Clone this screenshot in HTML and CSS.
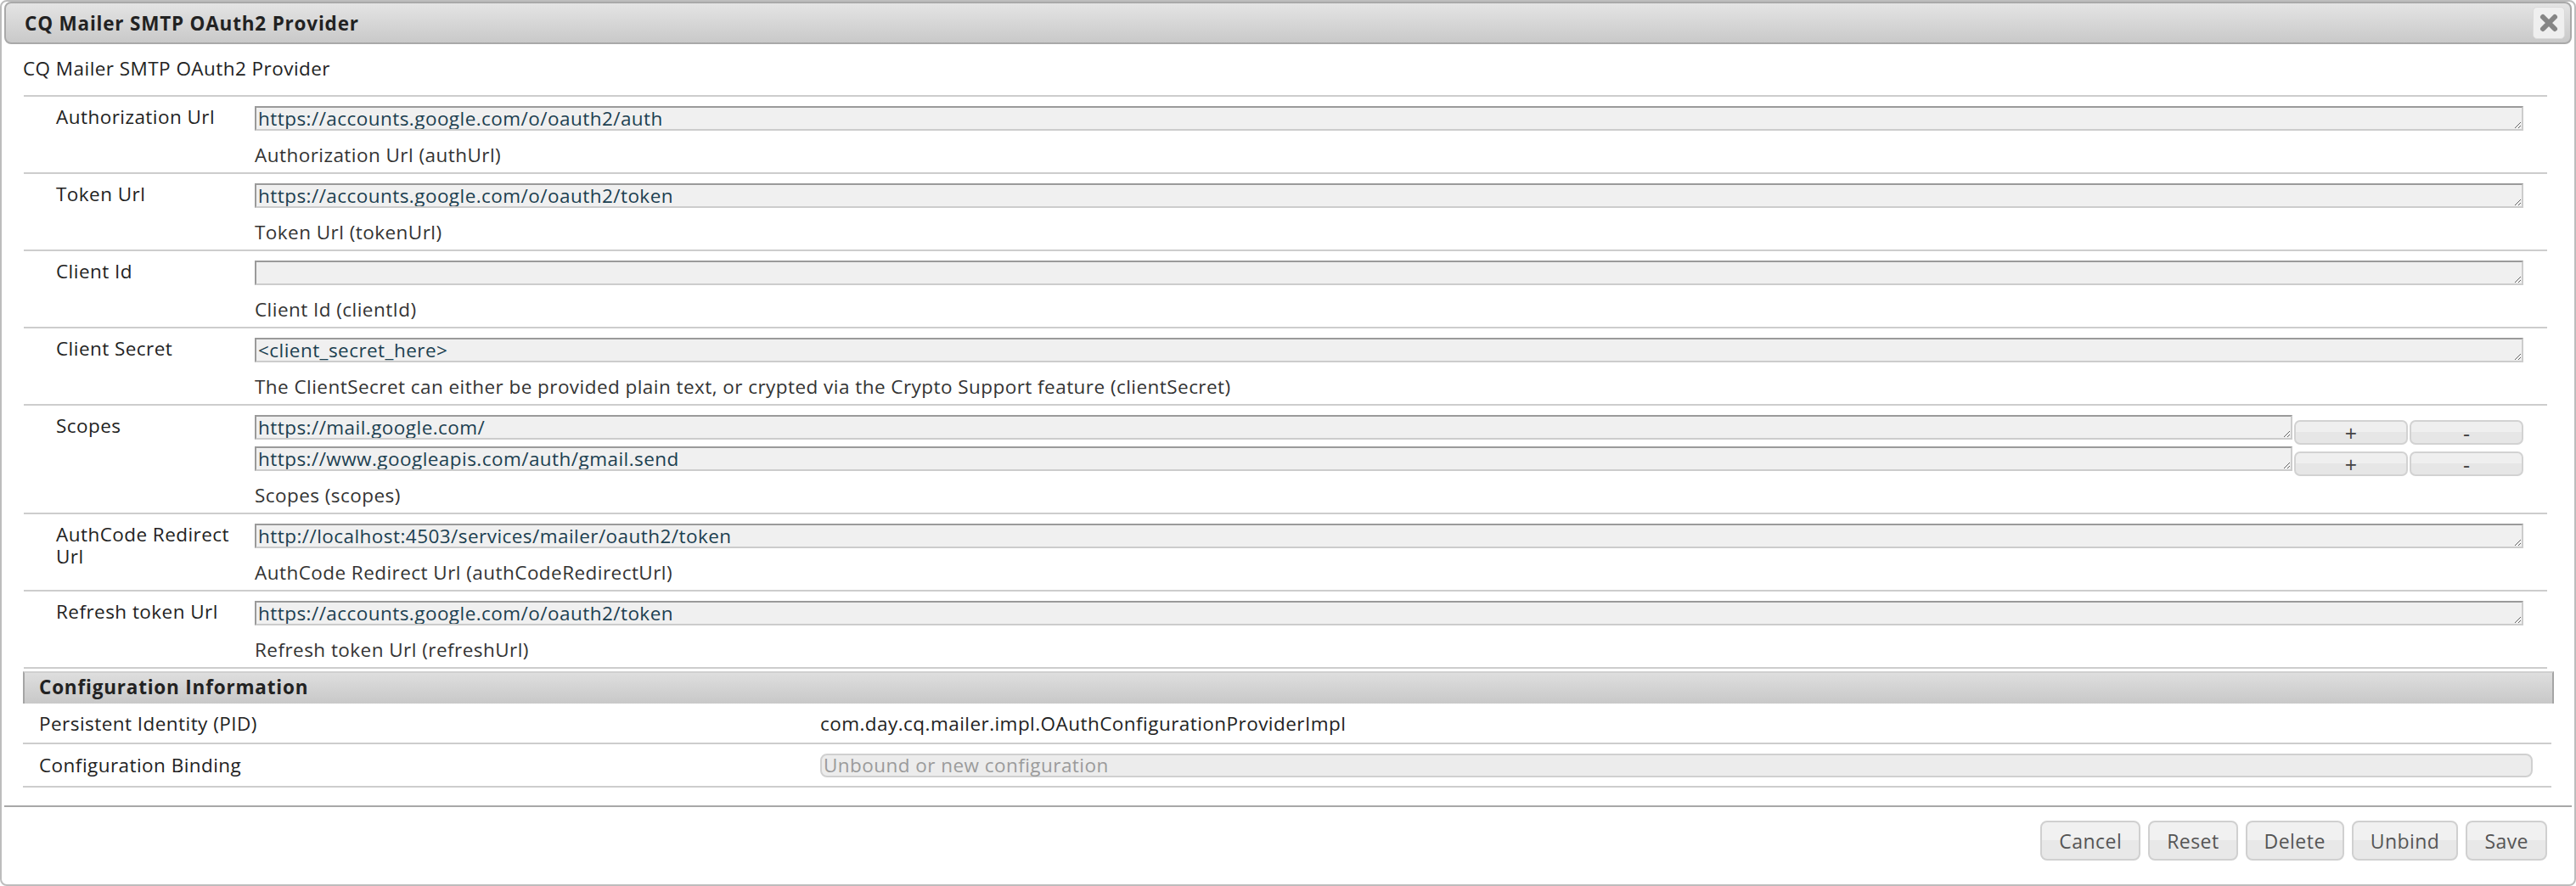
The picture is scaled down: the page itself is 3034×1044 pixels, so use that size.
FILE: index.html
```html
<!DOCTYPE html>
<html lang="en">
<head>
    <meta charset="UTF-8">
    <title>CQ Mailer SMTP OAuth2 Provider</title>
    <link rel="stylesheet" href="styles.css">
</head>
<body>
<div class="dialog">
    <div class="titlebar">
        <span class="title">CQ Mailer SMTP OAuth2 Provider</span>
        <span class="close">
            <svg width="26" height="26" viewBox="0 0 26 26"><path d="M6 6 L20 20 M20 6 L6 20" stroke="#858585" stroke-width="6" stroke-linecap="round"/></svg>
        </span>
    </div>
    <div class="content">
        <p class="subtitle">CQ Mailer SMTP OAuth2 Provider</p>
        <div class="props">
            <div class="prop">
                <div class="plabel">Authorization Url</div>
                <div class="pvalue">
                    <textarea class="field" rows="1">https://accounts.google.com/o/oauth2/auth</textarea>
                    <div class="desc">Authorization Url (authUrl)</div>
                </div>
            </div>
            <div class="prop">
                <div class="plabel">Token Url</div>
                <div class="pvalue">
                    <textarea class="field" rows="1">https://accounts.google.com/o/oauth2/token</textarea>
                    <div class="desc">Token Url (tokenUrl)</div>
                </div>
            </div>
            <div class="prop">
                <div class="plabel">Client Id</div>
                <div class="pvalue">
                    <textarea class="field" rows="1"></textarea>
                    <div class="desc">Client Id (clientId)</div>
                </div>
            </div>
            <div class="prop">
                <div class="plabel">Client Secret</div>
                <div class="pvalue">
                    <textarea class="field" rows="1">&lt;client_secret_here&gt;</textarea>
                    <div class="desc">The ClientSecret can either be provided plain text, or crypted via the Crypto Support feature (clientSecret)</div>
                </div>
            </div>
            <div class="prop">
                <div class="plabel">Scopes</div>
                <div class="pvalue">
                    <div class="multi">
                        <textarea class="field" rows="1">https://mail.google.com/</textarea>
                        <button class="small">+</button>
                        <button class="small">-</button>
                    </div>
                    <div class="multi">
                        <textarea class="field" rows="1">https://www.googleapis.com/auth/gmail.send</textarea>
                        <button class="small">+</button>
                        <button class="small">-</button>
                    </div>
                    <div class="desc">Scopes (scopes)</div>
                </div>
            </div>
            <div class="prop">
                <div class="plabel">AuthCode Redirect Url</div>
                <div class="pvalue">
                    <textarea class="field" rows="1">http://localhost:4503/services/mailer/oauth2/token</textarea>
                    <div class="desc">AuthCode Redirect Url (authCodeRedirectUrl)</div>
                </div>
            </div>
            <div class="prop">
                <div class="plabel">Refresh token Url</div>
                <div class="pvalue">
                    <textarea class="field" rows="1">https://accounts.google.com/o/oauth2/token</textarea>
                    <div class="desc">Refresh token Url (refreshUrl)</div>
                </div>
            </div>
        </div>

        <div class="config">
            <div class="confighead">Configuration Information</div>
            <div class="crow">
                <div class="clabel">Persistent Identity (PID)</div>
                <div class="cvalue">com.day.cq.mailer.impl.OAuthConfigurationProviderImpl</div>
            </div>
            <div class="crow crow-bind">
                <div class="clabel">Configuration Binding</div>
                <div class="cvalue"><div class="bind">Unbound or new configuration</div></div>
            </div>
        </div>
    </div>
    <div class="footer">
        <button class="btn">Cancel</button>
        <button class="btn">Reset</button>
        <button class="btn">Delete</button>
        <button class="btn">Unbind</button>
        <button class="btn">Save</button>
    </div>
</div>
</body>
</html>
```

FILE: styles.css
```css
body{
    margin: 0;
    font-family: "Open Sans", "Liberation Sans", sans-serif;
    font-size: 22.5px;
    letter-spacing: 0.45px;
    color: #222;
    background: #fff;
}
.dialog{
    height: 1044px;
    box-sizing: border-box;
    border: 2px solid #bdbdbd;
    border-radius: 8px;
    padding: 0 3px 0 3px;
    display: flex;
    flex-direction: column;
}
.titlebar{
    height: 50px;
    box-sizing: border-box;
    border: 2px solid #a9a9a9;
    border-radius: 8px;
    background: linear-gradient(#e4e4e4, #c9c9c9);
    display: flex;
    align-items: center;
    justify-content: space-between;
    padding: 0 6px 0 22px;
}
.title{
    font-weight: bold;
    letter-spacing: 0.8px;
    color: #222;
}
.close{
    width: 36px;
    height: 36px;
    border-radius: 5px;
    background: #efefef;
    border: 1px solid #dadada;
    display: flex;
    align-items: center;
    justify-content: center;
}
.content{
    padding: 0 27px 0 22px;
}
.subtitle{
    margin: 14px 0 16px 0;
    line-height: 30px;
}
.props{
    margin-left: 1px;
    margin-right: 2px;
}
.prop{
    display: flex;
    border-top: 2px solid #cdcdcd;
    padding: 11px 0 5px 0;
}
.prop:last-child{
    border-bottom: 2px solid #cdcdcd;
}
.plabel{
    width: 212px;
    padding: 0 22px 0 38px;
    line-height: 26px;
}
.pvalue{
    flex: 1;
    padding-right: 28px;
    min-width: 0;
}
.field{
    display: block;
    width: 100%;
    height: 29px;
    box-sizing: border-box;
    margin: 0;
    padding: 0 2px;
    font-family: inherit;
    font-size: 22.5px;
    letter-spacing: 0.45px;
    line-height: 25px;
    color: #1c4050;
    background: #f0f0f0;
    border: 2px solid;
    border-color: #9a9a9a #cccccc #cccccc #9a9a9a;
    overflow: hidden;
    white-space: pre;
}
.desc{
    margin-top: 14px;
    line-height: 30px;
    color: #333;
}
.multi{
    display: flex;
    align-items: flex-start;
}
.multi + .multi{
    margin-top: 8px;
}
.multi .field{
    flex: 1;
    width: auto;
}
.small{
    width: 134px;
    height: 29px;
    margin: 6px 0 -6px 2px;
    padding: 0;
    border: 2px solid #d2d2d2;
    border-radius: 7px;
    background: linear-gradient(#efefef 50%, #e6e6e6 50%);
    font-family: inherit;
    font-size: 25px;
    line-height: 22px;
    color: #444;
}
.config{
    margin-top: 3px;
    margin-right: -6px;
}
.confighead{
    height: 38px;
    box-sizing: border-box;
    border-top: 2px solid #cfcfcf;
    border-left: 2px solid #a5a5a5;
    border-right: 2px solid #a5a5a5;
    background: linear-gradient(#dedede, #c8c8c8);
    font-weight: bold;
    letter-spacing: 0.8px;
    line-height: 34px;
    padding-left: 17px;
}
.crow{
    display: flex;
    align-items: center;
    border-bottom: 2px solid #cdcdcd;
    height: 46px;
    margin-right: 3px;
}
.crow-bind{
    height: 49px;
}
.clabel{
    width: 920px;
    padding-left: 19px;
}
.cvalue{
    flex: 1;
    padding-right: 22px;
}
.bind{
    height: 28px;
    box-sizing: border-box;
    border: 2px solid #d0d0d0;
    border-radius: 8px;
    background: #ececec;
    color: #9b9b9b;
    line-height: 24px;
    padding-left: 2px;
}
.footer{
    margin-top: 21px;
    border-top: 2px solid #a8a8a8;
    display: flex;
    justify-content: flex-end;
    gap: 9px;
    padding: 16px 29px 0 0;
}
.btn{
    height: 47px;
    padding: 0 20px;
    border: 2px solid #d0d0d0;
    border-radius: 8px;
    background: linear-gradient(#f1f1f1 50%, #e8e8e8 50%);
    font-family: inherit;
    font-size: 23px;
    letter-spacing: 0.45px;
    color: #555;
}
```
